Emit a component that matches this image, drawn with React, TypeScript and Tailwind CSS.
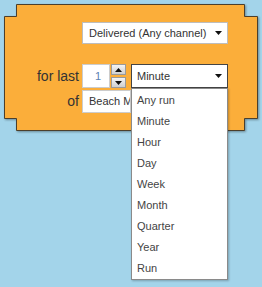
import React from "react";

const UNITS = ["Any run", "Minute", "Hour", "Day", "Week", "Month", "Quarter", "Year", "Run"];

function Caret() {
  return (
    <svg width="7" height="4" viewBox="0 0 7 4" className="shrink-0">
      <path d="M0 0 H7 L3.5 4 Z" fill="#111" />
    </svg>
  );
}

function SpinArrow({ up }: { up?: boolean }) {
  return (
    <svg width="7" height="4" viewBox="0 0 7 4">
      <path d={up ? "M0 4 H7 L3.5 0 Z" : "M0 0 H7 L3.5 4 Z"} fill="#111" />
    </svg>
  );
}

export default function App() {
  return (
    <div className="relative w-[262px] h-[287px] bg-[#a3d4ea] overflow-hidden font-['Liberation_Sans',Arial,sans-serif]">
      {/* block shape */}
      <svg width="262" height="140" className="absolute left-0 top-0" style={{ filter: "drop-shadow(1px 1px 1px rgba(0,0,0,0.35))" }}>
        <path
          d="M16.5 4.5 H244.5 V16.5 H257.5 V118.5 H244.5 V130.5 H16.5 V118.5 H4.5 V16.5 H16.5 Z"
          fill="#fbae3a"
          stroke="#4b3f2c"
          strokeWidth="1"
        />
      </svg>

      <div className="relative grid grid-cols-[79px_146px] gap-x-[3px] pt-[22px]">
        {/* row 1 */}
        <div />
        <div className="h-[22px] bg-white border border-[#bdbdbd] flex items-center justify-between pl-[6px] pr-[5px] text-[11px] text-[#333]">
          <span>Delivered (Any channel)</span>
          <Caret />
        </div>

        {/* row 2 */}
        <div className="mt-[20px] h-[24px] flex items-center justify-end text-[14px] text-[#333]">for last</div>
        <div className="mt-[20px] h-[24px] flex items-stretch">
          <div className="w-[28px] bg-white border border-[#ccc] flex items-center justify-end pr-[8px] text-[11px] text-[#5b7fb0]">1</div>
          <div className="w-[15px] ml-[1px] flex flex-col justify-between">
            <div className="h-[11px] bg-gradient-to-b from-[#f4f4f4] to-[#cfcfcf] border border-[#9a9a9a] flex items-center justify-center">
              <SpinArrow up />
            </div>
            <div className="h-[11px] bg-gradient-to-b from-[#f4f4f4] to-[#cfcfcf] border border-[#9a9a9a] flex items-center justify-center">
              <SpinArrow />
            </div>
          </div>
          <div className="ml-[5px] w-[97px] bg-white border border-[#444] flex items-center justify-between pl-[5px] pr-[5px] text-[11px] text-[#333]">
            <span>Minute</span>
            <Caret />
          </div>
        </div>

        {/* row 3 */}
        <div className="mt-[2px] h-[23px] flex items-center justify-end text-[14px] text-[#333]">of</div>
        <div className="mt-[2px] h-[23px] w-[49px] bg-white border border-[#ccc] flex items-center pl-[6px] text-[11px] text-[#333] overflow-hidden whitespace-nowrap">
          Beach Monitoring
        </div>
      </div>

      {/* open dropdown */}
      <div className="absolute left-[131px] top-[88px] w-[97px] pt-[1px] bg-white border border-[#8a8a8a] shadow-[1px_1px_2px_rgba(0,0,0,0.25)] text-[11px] text-[#444]">
        {UNITS.map((u) => (
          <div key={u} className="h-[21px] flex items-center pl-[5px]">
            {u}
          </div>
        ))}
      </div>
    </div>
  );
}
